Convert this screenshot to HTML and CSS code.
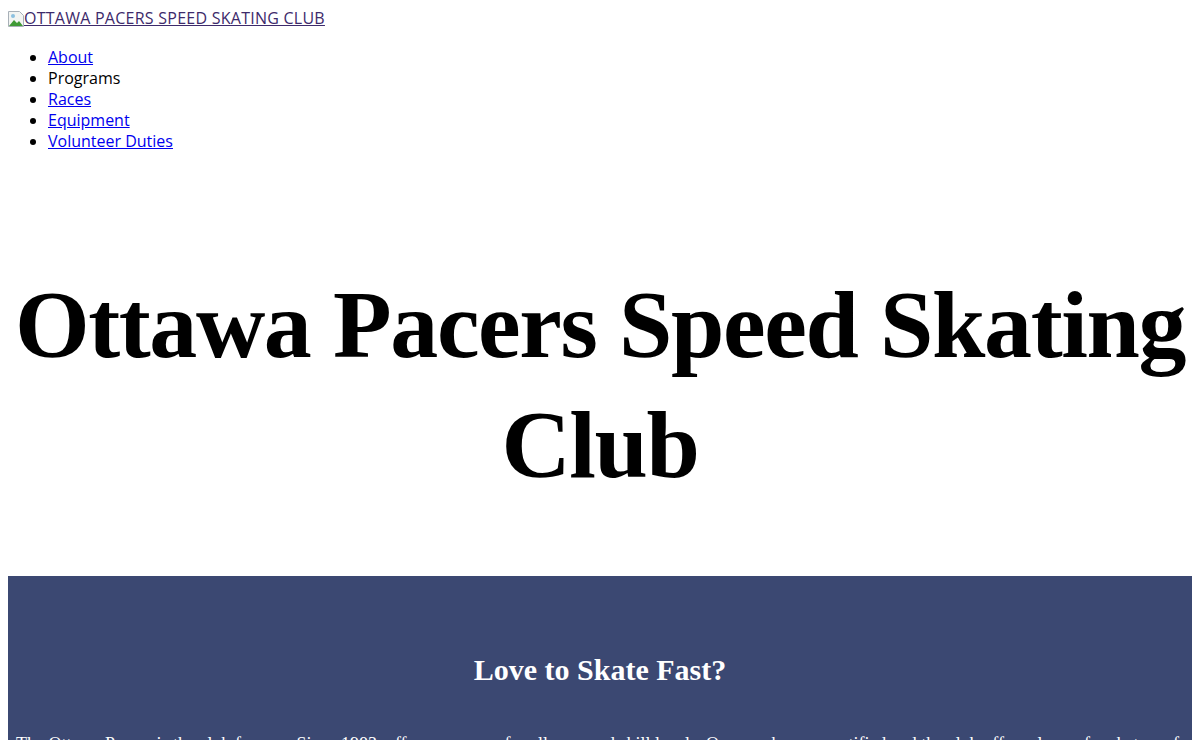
FILE: index.html
```html
<!DOCTYPE html>
<html lang="en">
<head>
<meta charset="utf-8">
<title>Ottawa Pacers Speed Skating Club</title>
<link rel="stylesheet" href="styles.css">
</head>
<body>
<header class="site-header">
  <a class="logo" href="#"><span class="broken-img"><svg width="16" height="16" viewBox="0 0 16 16"><path d="M0.5 0.5h11l4 4v11h-15z" fill="#f2f4f2" stroke="#a8b0b8"/><path d="M1 15l5-6 3 3 2-2 4 5z" fill="#3f9a36"/><circle cx="5" cy="5" r="2" fill="#8cc0e0"/></svg></span>OTTAWA PACERS SPEED SKATING CLUB</a>
  <ul class="nav">
    <li><a href="#">About</a></li>
    <li>Programs</li>
    <li><a href="#">Races</a></li>
    <li><a href="#">Equipment</a></li>
    <li><a href="#">Volunteer Duties</a></li>
  </ul>
</header>
<section class="hero">
  <h1 class="hero-title">Ottawa Pacers Speed Skating Club</h1>
</section>
<section class="intro">
  <h2 class="intro-title">Love to Skate Fast?</h2>
  <p class="intro-text">The Ottawa Pacers is the club for you. Since 1983, offers programs for all ages and skill levels. Our coaches are certified and the club offers classes for skaters of all levels of skill, from beginners to competitive racers.</p>
</section>
</body>
</html>
```
FILE: styles.css
```css
body {
  margin: 8px;
  font-family: "Open Sans", "Noto Sans", sans-serif;
  font-size: 16px;
  line-height: 21px;
  color: #000;
}
.logo { color: #3d2a6b; display: inline-flex; align-items: flex-end; letter-spacing: 0.25px; }
.broken-img { display: inline-block; width: 16px; height: 16px; margin-bottom: 2px; }
.nav { margin: 15px 0 16px; padding-left: 40px; }
.nav a { color: #0000ee; }
.hero { padding: 97px 0 71px; }
.hero-title {
  margin: 0;
  text-align: center;
  font-family: "Liberation Serif", "DejaVu Serif", serif;
  font-weight: 700;
  font-size: 96px;
  letter-spacing: -1.4px;
  line-height: 120px;
}
.intro {
  background: #3b4872;
  color: #fff;
  padding: 74px 8px 0;
  overflow: hidden;
}
.intro-title {
  margin: 0 0 40px;
  text-align: center;
  font-family: "Liberation Serif", serif;
  font-weight: 700;
  font-size: 30px;
  line-height: 40px;
}
.intro-text {
  margin: 0;
  font-family: "Liberation Serif", serif;
  font-size: 18px;
  line-height: 28px;
}
```
